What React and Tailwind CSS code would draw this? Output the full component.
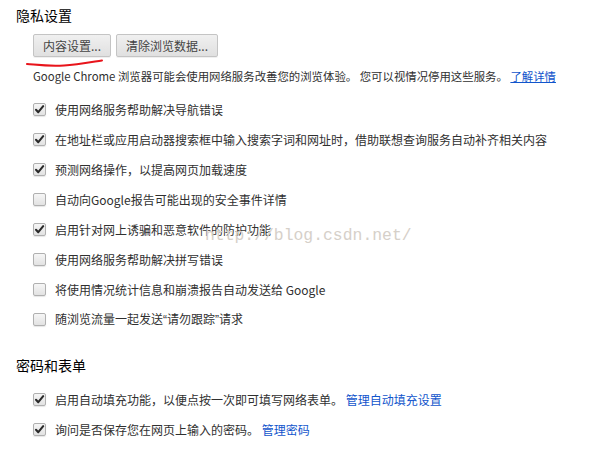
import React from "react";

function Checkbox({ checked }) {
  return (
    <div className="relative w-[13px] h-[13px] shrink-0 rounded-[2px] border border-[#b0b0b0] bg-gradient-to-b from-[#f6f6f6] to-[#e2e2e2] shadow-[0_1px_1px_rgba(0,0,0,0.1)]">
      {checked && (
        <svg viewBox="0 0 13 13" className="absolute left-[-1px] top-[-1px] w-[13px] h-[13px]">
          <path d="M3 6.8 L5.3 9.2 L10.2 3.2" fill="none" stroke="#2a2a2a" strokeWidth="2.1" strokeLinecap="round" strokeLinejoin="round" />
        </svg>
      )}
    </div>
  );
}

function Row({ checked, children }) {
  return (
    <div className="h-[30px] flex items-center pl-[33px]">
      <Checkbox checked={checked} />
      <span className="ml-[9px] text-[12px] leading-[17px] text-[#303030] whitespace-nowrap">{children}</span>
    </div>
  );
}

function Btn({ children }) {
  return (
    <button className="h-[23px] px-[9px] rounded-[2px] border border-[#c4c4c4] bg-gradient-to-b from-[#f0f0f0] to-[#e0e0e0] text-[12px] leading-[17px] text-[#444] shadow-[0_1px_0_rgba(0,0,0,0.06)]">
      {children}
    </button>
  );
}

const Q = ({ children }) => (
  <span style={{ fontFamily: '"Liberation Sans", sans-serif' }}>{children}</span>
);

export default function App() {
  return (
    <div
      className="relative w-[601px] h-[453px] bg-white overflow-hidden"
      style={{ fontFamily: '"Noto Sans CJK SC", "Noto Sans", sans-serif' }}
    >
      <div className="h-[30px] flex items-center pl-[16px] text-[14px] text-black">隐私设置</div>
      <div className="mt-[4px] pl-[33px] flex gap-[5px]">
        <Btn>内容设置...</Btn>
        <Btn>清除浏览数据...</Btn>
      </div>
      <div className="mt-[10px] h-[18px] pl-[33px] text-[11.4px] leading-[18px] text-[#303030] whitespace-nowrap">
        Google Chrome 浏览器可能会使用网络服务改善您的浏览体验。 您可以视情况停用这些服务。{" "}
        <span className="text-[#1155cc] underline">了解详情</span>
      </div>
      <div className="mt-[9px]">
        <Row checked>使用网络服务帮助解决导航错误</Row>
        <Row checked>在地址栏或应用启动器搜索框中输入搜索字词和网址时，借助联想查询服务自动补齐相关内容</Row>
        <Row checked>预测网络操作，以提高网页加载速度</Row>
        <Row>自动向Google报告可能出现的安全事件详情</Row>
        <Row checked>启用针对网上诱骗和恶意软件的防护功能</Row>
        <Row>使用网络服务帮助解决拼写错误</Row>
        <Row>将使用情况统计信息和崩溃报告自动发送给 Google</Row>
        <Row>
          随浏览流量一起发送<Q>“</Q>请勿跟踪<Q>”</Q>请求
        </Row>
      </div>
      <div className="mt-[16px] h-[30px] flex items-center pl-[16px] text-[14px] text-black">密码和表单</div>
      <div className="mt-[4px]">
        <Row checked>
          启用自动填充功能，以便点按一次即可填写网络表单。 <span className="text-[#1155cc]">管理自动填充设置</span>
        </Row>
        <Row checked>
          询问是否保存您在网页上输入的密码。 <span className="text-[#1155cc]">管理密码</span>
        </Row>
      </div>

      <svg className="absolute left-[24px] top-[57px]" width="82" height="12" viewBox="0 0 82 12">
        <path d="M3 7 C 15 8, 25 9.5, 40 8.5 C 52 7.8, 62 6, 78 3.5" fill="none" stroke="#e8141b" strokeWidth="2" strokeLinecap="round" />
      </svg>

      <div
        className="absolute left-[205px] top-[225px] text-[16.4px] leading-[22px] text-[#d6d0c9] whitespace-nowrap pointer-events-none"
        style={{ fontFamily: '"Liberation Mono", monospace' }}
      >
        http://blog.csdn.net/
      </div>
    </div>
  );
}
